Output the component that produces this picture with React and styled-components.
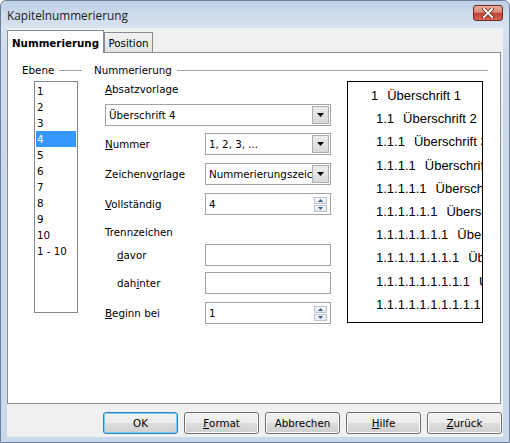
import React from "react";
import styled, { createGlobalStyle } from "styled-components";

const GlobalStyle = createGlobalStyle`
  html, body {
    margin: 0;
    padding: 0;
    background: #ffffff;
  }
  body {
    font-family: "DejaVu Sans", Verdana, sans-serif;
    font-size: 10.3px;
    color: #000;
  }
  * {
    box-sizing: border-box;
  }
`;

const Window = styled.div`
  width: 510px;
  height: 443px;
  border: 1px solid #6f819a;
  border-radius: 6px 6px 0 0;
  background: linear-gradient(
    to bottom,
    #bfd1e7 0px,
    #d8e3f0 26px,
    #ccdaeb 60px,
    #c9d8ea 100%
  );
  padding: 0 6px 5px 6px;
  display: flex;
  flex-direction: column;
  overflow: hidden;
`;

const TitleBar = styled.div`
  height: 27px;
  display: flex;
  align-items: flex-start;
`;

const Title = styled.div`
  font-family: "Open Sans", "DejaVu Sans", sans-serif;
  font-size: 11.8px;
  line-height: 28px;
  color: #1b1b1b;
`;

const CloseButton = styled.div`
  margin-left: auto;
  margin-top: 4px;
  width: 30px;
  height: 16px;
  border: 1px solid #6b2a22;
  border-radius: 3px;
  background: linear-gradient(
    to bottom,
    #e8aa9c 0%,
    #d98a7a 45%,
    #c2402f 50%,
    #cf6552 100%
  );
  display: flex;
  align-items: center;
  justify-content: center;
`;

const Client = styled.div`
  flex: 1;
  background: #f0f0f0;
  padding-top: 2px;
  display: flex;
  flex-direction: column;
`;

const TabRow = styled.div`
  height: 22px;
  display: flex;
  align-items: flex-end;
`;

const Tab = styled.div`
  position: relative;
  z-index: ${(p) => (p.$active ? 1 : 0)};
  width: ${(p) => p.$width}px;
  height: ${(p) => (p.$active ? 23 : 20)}px;
  margin-bottom: ${(p) => (p.$active ? -1 : 0)}px;
  border: 1px solid #898c95;
  border-bottom: none;
  background: ${(p) =>
    p.$active ? "#ffffff" : "linear-gradient(to bottom, #f2f2f2, #e3e3e3)"};
  font-weight: ${(p) => (p.$active ? "bold" : "normal")};
  padding-top: ${(p) => (p.$active ? 4 : 2)}px;
  line-height: 16px;
  text-align: center;
  white-space: nowrap;
`;

const Panel = styled.div`
  width: 494px;
  height: 352px;
  border: 1px solid #898c95;
  background: #ffffff;
  padding: 10px 0 0 14px;
  display: flex;
  gap: 12px;
`;

const Group = styled.div`
  width: ${(p) => p.$width}px;
  display: flex;
  flex-direction: column;
`;

const Legend = styled.div`
  height: 14px;
  line-height: 14px;
  display: flex;
  align-items: center;
  white-space: nowrap;
`;

const LegendLine = styled.div`
  flex: 1;
  height: 1px;
  margin-left: 5px;
  background: #a0a0a0;
`;

const LevelList = styled.div`
  margin: 4px 0 0 12px;
  width: 44px;
  height: 232px;
  border: 1px solid #828790;
  background: #ffffff;
  padding-top: 1px;
`;

const LevelItem = styled.div`
  height: 16px;
  line-height: 16px;
  margin: 0 1px;
  padding-left: 1px;
  background: ${(p) => (p.$selected ? "#3399ff" : "transparent")};
  color: ${(p) => (p.$selected ? "#ffffff" : "#000000")};
  white-space: nowrap;
`;

const GroupBody = styled.div`
  margin-top: 4px;
  display: flex;
  align-items: flex-start;
`;

const Form = styled.div`
  margin-left: 11px;
  width: 226px;
  display: flex;
  flex-direction: column;
`;

const Label = styled.div`
  height: 16px;
  line-height: 16px;
  margin-top: ${(p) => p.$top || 0}px;
  white-space: nowrap;
`;

const Row = styled.div`
  height: 22px;
  margin-top: ${(p) => p.$top}px;
  display: flex;
  align-items: center;
`;

const RowLabel = styled.div`
  width: 100px;
  padding-left: ${(p) => p.$indent || 0}px;
  white-space: nowrap;
`;

const Field = styled.div`
  width: ${(p) => p.$width}px;
  height: 22px;
  border: 1px solid #a3a3a3;
  background: #ffffff;
  display: flex;
  align-items: center;
  padding-left: 3px;
  overflow: hidden;
`;

const FieldText = styled.div`
  flex: 1;
  overflow: hidden;
  white-space: nowrap;
`;

const DropButton = styled.div`
  flex: none;
  width: 17px;
  height: 18px;
  margin-right: 1px;
  border: 1px solid #adadad;
  background: linear-gradient(to bottom, #ececec, #d9d9d9);
  display: flex;
  align-items: center;
  justify-content: center;
`;

const Spin = styled.div`
  flex: none;
  width: 13px;
  margin-right: 3px;
  display: flex;
  flex-direction: column;
  gap: 1px;
`;

const SpinHalf = styled.div`
  height: 7px;
  border: 1px solid #bcc4cf;
  background: linear-gradient(to bottom, #f6f8fb, #e3e8ef);
  display: flex;
  align-items: center;
  justify-content: center;
`;

const Preview = styled.div`
  margin-left: 16px;
  width: 136px;
  height: 242px;
  border: 1px solid #000000;
  background: #ffffff;
  padding-top: 2px;
  overflow: hidden;
  font-family: "Liberation Sans", Arial, sans-serif;
  font-size: 13px;
`;

const PreviewRow = styled.div`
  height: 23.2px;
  line-height: 23.2px;
  padding-left: ${(p) => p.$indent}px;
  white-space: nowrap;
`;

const PreviewNum = styled.span`
  margin-right: 9px;
`;

const ButtonRow = styled.div`
  margin-top: 8px;
  padding-right: 1px;
  display: flex;
  justify-content: flex-end;
  gap: 6px;
`;

const Button = styled.div`
  width: 75px;
  height: 22px;
  border: 1px solid ${(p) => (p.$default ? "#3c7fb1" : "#707070")};
  border-radius: 3px;
  background: linear-gradient(
    to bottom,
    #f2f2f2 0%,
    #ebebeb 50%,
    #dddddd 50%,
    #cfcfcf 100%
  );
  box-shadow: inset 0 0 0 1px ${(p) => (p.$default ? "#6fd0f6" : "#fbfbfb")};
  display: flex;
  align-items: center;
  justify-content: center;
  white-space: nowrap;
`;

const U = styled.span`
  text-decoration: underline;
`;

const DownArrow = () => (
  <svg width="7" height="4" viewBox="0 0 7 4">
    <polygon points="0,0 7,0 3.5,4" fill="#000" />
  </svg>
);

const SpinArrow = ({ up }) => (
  <svg width="5" height="3" viewBox="0 0 5 3">
    <polygon
      points={up ? "0,3 5,3 2.5,0" : "0,0 5,0 2.5,3"}
      fill="#3d5c90"
    />
  </svg>
);

const Dropdown = ({ width, children }) => (
  <Field $width={width}>
    <FieldText>{children}</FieldText>
    <DropButton>
      <DownArrow />
    </DropButton>
  </Field>
);

const SpinField = ({ value }) => (
  <Field $width={126}>
    <FieldText>{value}</FieldText>
    <Spin>
      <SpinHalf>
        <SpinArrow up />
      </SpinHalf>
      <SpinHalf>
        <SpinArrow />
      </SpinHalf>
    </Spin>
  </Field>
);

const levels = ["1", "2", "3", "4", "5", "6", "7", "8", "9", "10", "1 - 10"];

const previewRows = Array.from({ length: 10 }, (_, i) => ({
  num: Array(i + 1).fill("1").join("."),
  text: "Überschrift " + (i + 1),
}));

const buttons = [
  { label: "OK", isDefault: true },
  { label: <><U>F</U>ormat</> },
  { label: "Abbrechen" },
  { label: <><U>H</U>ilfe</> },
  { label: <><U>Z</U>urück</> },
];

export default function App() {
  return (
    <>
      <GlobalStyle />
      <Window>
        <TitleBar>
          <Title>Kapitelnummerierung</Title>
          <CloseButton>
            <svg width="12" height="10" viewBox="0 0 12 10">
              <path
                d="M2 1 L10 9 M10 1 L2 9"
                stroke="#5a2018"
                strokeWidth="3.6"
                strokeLinecap="square"
              />
              <path
                d="M2 1 L10 9 M10 1 L2 9"
                stroke="#ffffff"
                strokeWidth="2"
                strokeLinecap="square"
              />
            </svg>
          </CloseButton>
        </TitleBar>
        <Client>
          <TabRow>
            <Tab $active $width={97}>
              Nummerierung
            </Tab>
            <Tab $width={49}>Position</Tab>
          </TabRow>
          <Panel>
            <Group $width={60}>
              <Legend>
                Ebene
                <LegendLine />
              </Legend>
              <LevelList>
                {levels.map((l) => (
                  <LevelItem key={l} $selected={l === "4"}>
                    {l}
                  </LevelItem>
                ))}
              </LevelList>
            </Group>
            <Group $width={394}>
              <Legend>
                Nummerierung
                <LegendLine />
              </Legend>
              <GroupBody>
                <Form>
                  <Label>
                    <U>A</U>bsatzvorlage
                  </Label>
                  <Row $top={7}>
                    <Dropdown width={226}>Überschrift 4</Dropdown>
                  </Row>
                  <Row $top={7}>
                    <RowLabel>
                      <U>N</U>ummer
                    </RowLabel>
                    <Dropdown width={126}>1, 2, 3, ...</Dropdown>
                  </Row>
                  <Row $top={8}>
                    <RowLabel>
                      Zeichenv<U>o</U>rlage
                    </RowLabel>
                    <Dropdown width={126}>Nummerierungszeichen</Dropdown>
                  </Row>
                  <Row $top={8}>
                    <RowLabel>
                      <U>V</U>ollständig
                    </RowLabel>
                    <SpinField value="4" />
                  </Row>
                  <Label $top={9}>Trennzeichen</Label>
                  <Row $top={4}>
                    <RowLabel $indent={12}>
                      <U>d</U>avor
                    </RowLabel>
                    <Field $width={126} />
                  </Row>
                  <Row $top={6}>
                    <RowLabel $indent={12}>
                      dah<U>i</U>nter
                    </RowLabel>
                    <Field $width={126} />
                  </Row>
                  <Row $top={8}>
                    <RowLabel>
                      <U>B</U>eginn bei
                    </RowLabel>
                    <SpinField value="1" />
                  </Row>
                </Form>
                <Preview>
                  {previewRows.map((r, i) => (
                    <PreviewRow key={i} $indent={i === 0 ? 23 : 28}>
                      <PreviewNum>{r.num}</PreviewNum>
                      {r.text}
                    </PreviewRow>
                  ))}
                </Preview>
              </GroupBody>
            </Group>
          </Panel>
          <ButtonRow>
            {buttons.map((b, i) => (
              <Button key={i} $default={b.isDefault}>
                {b.label}
              </Button>
            ))}
          </ButtonRow>
        </Client>
      </Window>
    </>
  );
}
